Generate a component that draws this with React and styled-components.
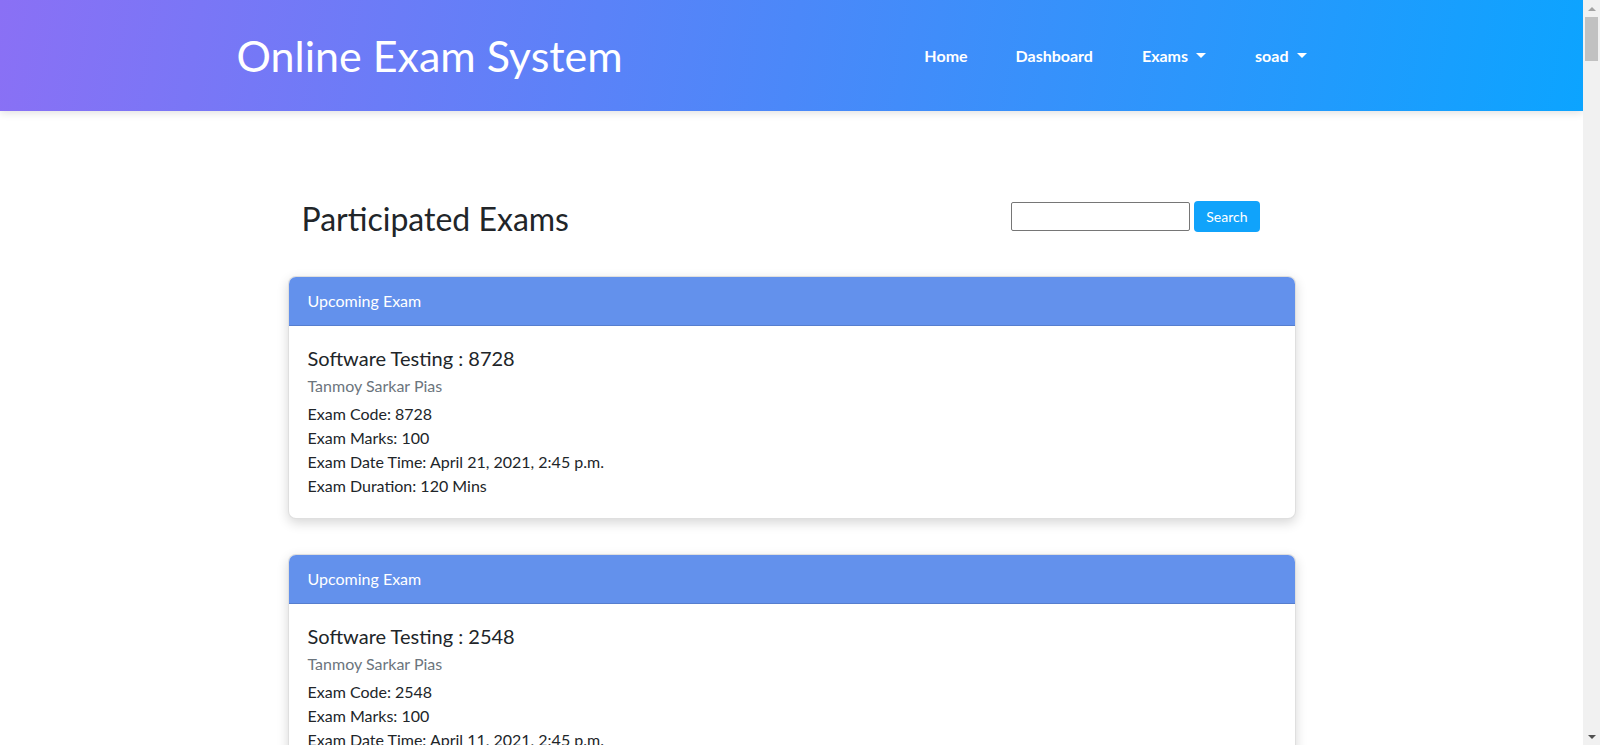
import React from 'react';
import styled, { createGlobalStyle } from 'styled-components';

const GlobalStyle = createGlobalStyle`
  html, body {
    margin: 0;
    padding: 0;
    background: #fff;
    font-family: Lato, "Open Sans", sans-serif;
    color: #212529;
  }
  body {
    padding-right: 17px;
  }
  * {
    box-sizing: border-box;
  }
`;

/* stand-in for the classic browser scrollbar seen in the screenshot */
const ScrollTrack = styled.div`
  position: fixed;
  top: 0;
  right: 0;
  width: 17px;
  height: 100vh;
  background: #f1f1f1;
  display: flex;
  flex-direction: column;
  align-items: center;
  z-index: 10;
`;

const ScrollArrow = styled.div`
  height: 17px;
  width: 17px;
  display: flex;
  align-items: center;
  justify-content: center;

  &::before {
    content: "";
    border-left: 4px solid transparent;
    border-right: 4px solid transparent;
    ${(p) => (p.$down ? 'border-top: 4px solid #505050;' : 'border-bottom: 4px solid #a3a3a3;')}
  }
`;

const ScrollThumb = styled.div`
  width: 13px;
  height: 44px;
  background: #c1c1c1;
`;

const ScrollSpacer = styled.div`
  flex: 1;
`;

const Header = styled.header`
  height: 111px;
  background: linear-gradient(100deg, #8a70f5 0%, #4b88f9 50%, #0ca4ff 100%);
  box-shadow: 0 2px 8px rgba(0, 0, 0, 0.12);
  display: flex;
  justify-content: center;
`;

const HeaderInner = styled.div`
  width: 1110px;
  display: flex;
  justify-content: space-between;
  align-items: center;
`;

const Brand = styled.a`
  color: #fff;
  font-size: 43px;
  font-weight: 400;
  text-decoration: none;
  margin-top: -1px;
`;

const NavList = styled.ul`
  display: flex;
  align-items: center;
  list-style: none;
  margin: 0 16px 0 0;
  padding: 0;
`;

const NavItem = styled.li`
  padding: 0 24px;
  color: #fff;
  font-size: 16px;
  font-weight: 700;
  cursor: pointer;

  ${(p) =>
    p.$dropdown &&
    `
    padding-left: 25px;
    &::after {
      content: "";
      display: inline-block;
      margin-left: 8px;
      vertical-align: 4px;
      border-top: 5px solid #fff;
      border-left: 5px solid transparent;
      border-right: 5px solid transparent;
    }
  `}
`;

const Main = styled.main`
  width: 1008px;
  margin: 0 auto;
  padding: 89px 0 40px;
`;

const TitleRow = styled.div`
  display: flex;
  justify-content: space-between;
  align-items: flex-start;
  padding: 0 36px 0 14px;
  margin-bottom: 38px;
`;

const PageTitle = styled.h1`
  margin: 0;
  font-size: 32px;
  font-weight: 400;
  line-height: 38px;
`;

const SearchForm = styled.form`
  display: flex;
  align-items: center;
  gap: 4px;
  margin-top: 1px;
`;

const SearchInput = styled.input`
  width: 179px;
  height: 29px;
  border: 1px solid #767676;
  border-radius: 2px;
  padding: 2px 6px;
  font-size: 14px;
`;

const SearchButton = styled.button`
  height: 31px;
  padding: 0 12px;
  border: none;
  border-radius: 4px;
  background: #10a3fb;
  color: #fff;
  font-family: Lato, sans-serif;
  font-size: 14px;
  cursor: pointer;
`;

const Card = styled.div`
  border: 1px solid rgba(0, 0, 0, 0.125);
  border-radius: 8px;
  overflow: hidden;
  background: #fff;
  box-shadow: 0 4px 12px rgba(0, 0, 0, 0.16);
  margin-bottom: 35px;
`;

const CardHeader = styled.div`
  background: #6391ec;
  color: #fff;
  padding: 12px 19px;
  font-size: 16px;
  line-height: 24px;
  border-bottom: 1px solid rgba(0, 0, 0, 0.125);
`;

const CardBody = styled.div`
  padding: 20px 19px;
`;

const CardTitle = styled.h5`
  margin: 0 0 4px;
  font-size: 20px;
  font-weight: 400;
  line-height: 24px;
`;

const CardSubtitle = styled.h6`
  margin: 0 0 4px;
  font-size: 16px;
  font-weight: 400;
  line-height: 24px;
  color: #6c757d;
`;

const InfoLine = styled.p`
  margin: 0;
  font-size: 16px;
  line-height: 24px;
`;

const exams = [
  { code: '8728', date: 'April 21, 2021, 2:45 p.m.' },
  { code: '2548', date: 'April 11, 2021, 2:45 p.m.' },
];

const App = () => {
  return (
    <>
      <GlobalStyle />
      <ScrollTrack>
        <ScrollArrow />
        <ScrollThumb />
        <ScrollSpacer />
        <ScrollArrow $down />
      </ScrollTrack>
      <Header>
        <HeaderInner>
          <Brand href="#">Online Exam System</Brand>
          <NavList>
            <NavItem>Home</NavItem>
            <NavItem>Dashboard</NavItem>
            <NavItem $dropdown>Exams</NavItem>
            <NavItem $dropdown>soad</NavItem>
          </NavList>
        </HeaderInner>
      </Header>
      <Main>
        <TitleRow>
          <PageTitle>Participated Exams</PageTitle>
          <SearchForm onSubmit={(e) => e.preventDefault()}>
            <SearchInput type="text" />
            <SearchButton type="submit">Search</SearchButton>
          </SearchForm>
        </TitleRow>
        {exams.map((exam) => (
          <Card key={exam.code}>
            <CardHeader>Upcoming Exam</CardHeader>
            <CardBody>
              <CardTitle>Software Testing : {exam.code}</CardTitle>
              <CardSubtitle>Tanmoy Sarkar Pias</CardSubtitle>
              <InfoLine>Exam Code: {exam.code}</InfoLine>
              <InfoLine>Exam Marks: 100</InfoLine>
              <InfoLine>Exam Date Time: {exam.date}</InfoLine>
              <InfoLine>Exam Duration: 120 Mins</InfoLine>
            </CardBody>
          </Card>
        ))}
      </Main>
    </>
  );
};

export default App;
